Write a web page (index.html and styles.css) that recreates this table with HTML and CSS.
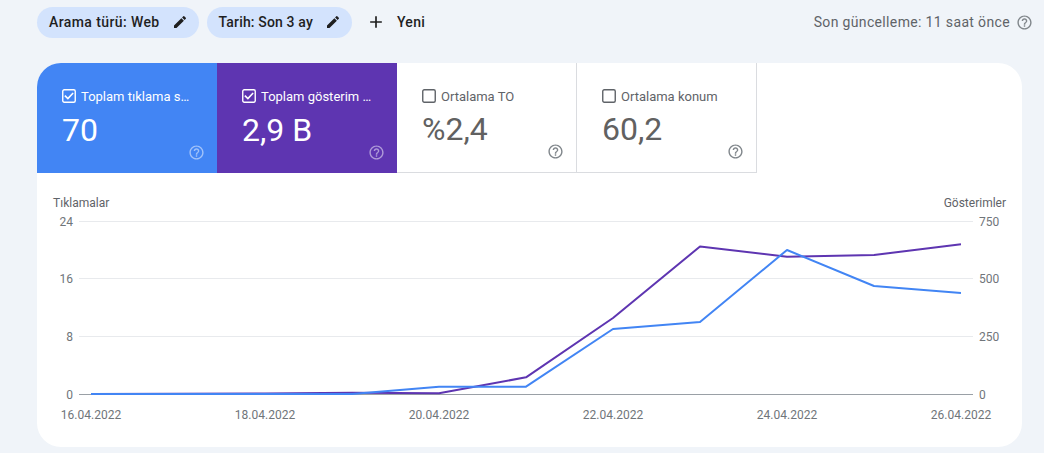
FILE: index.html
```html
<!DOCTYPE html>
<html lang="tr">
<head>
<meta charset="utf-8">
<title>Performans</title>
<link rel="stylesheet" href="styles.css">
</head>
<body>
<header class="topbar">
  <div class="filters">
    <button class="chip chip-type">Arama türü: Web
      <svg class="chip-icon" viewBox="0 0 24 24"><path d="M3 17.25V21h3.75L17.81 9.94l-3.75-3.75L3 17.25zM20.71 7.04c.39-.39.39-1.02 0-1.41l-2.34-2.34a.996.996 0 0 0-1.41 0l-1.83 1.83 3.75 3.75 1.83-1.83z"/></svg>
    </button>
    <button class="chip chip-date">Tarih: Son 3 ay
      <svg class="chip-icon" viewBox="0 0 24 24"><path d="M3 17.25V21h3.75L17.81 9.94l-3.75-3.75L3 17.25zM20.71 7.04c.39-.39.39-1.02 0-1.41l-2.34-2.34a.996.996 0 0 0-1.41 0l-1.83 1.83 3.75 3.75 1.83-1.83z"/></svg>
    </button>
    <button class="new">
      <svg class="plus" viewBox="0 0 24 24"><path d="M19 13h-6v6h-2v-6H5v-2h6V5h2v6h6v2z"/></svg>
      Yeni
    </button>
  </div>
  <div class="updated">Son güncelleme: 11 saat önce
    <svg class="help grey" viewBox="0 0 24 24"><path d="M11 18h2v-2h-2v2zm1-16C6.48 2 2 6.48 2 12s4.48 10 10 10 10-4.48 10-10S17.52 2 12 2zm0 18c-4.41 0-8-3.59-8-8s3.59-8 8-8 8 3.59 8 8-3.59 8-8 8zm0-14c-2.21 0-4 1.79-4 4h2c0-1.1.9-2 2-2s2 .9 2 2c0 2-3 1.75-3 5h2c0-2.25 3-2.5 3-5 0-2.21-1.79-4-4-4z"/></svg>
  </div>
</header>

<main class="card">
  <div class="tiles">
    <div class="tile tile-blue">
      <div class="tile-head">
        <svg class="cb" viewBox="0 0 14 14"><rect x="0.75" y="0.75" width="12.5" height="12.5" rx="1.5"/><polyline points="3.4,7.2 5.9,9.6 10.6,4.6"/></svg>
        <span class="tile-label">Toplam tıklama sayısı</span>
      </div>
      <div class="tile-body">
        <span class="tile-value">70</span>
        <svg class="help light" viewBox="0 0 24 24"><path d="M11 18h2v-2h-2v2zm1-16C6.48 2 2 6.48 2 12s4.48 10 10 10 10-4.48 10-10S17.52 2 12 2zm0 18c-4.41 0-8-3.59-8-8s3.59-8 8-8 8 3.59 8 8-3.59 8-8 8zm0-14c-2.21 0-4 1.79-4 4h2c0-1.1.9-2 2-2s2 .9 2 2c0 2-3 1.75-3 5h2c0-2.25 3-2.5 3-5 0-2.21-1.79-4-4-4z"/></svg>
      </div>
    </div>
    <div class="tile tile-purple">
      <div class="tile-head">
        <svg class="cb" viewBox="0 0 14 14"><rect x="0.75" y="0.75" width="12.5" height="12.5" rx="1.5"/><polyline points="3.4,7.2 5.9,9.6 10.6,4.6"/></svg>
        <span class="tile-label">Toplam gösterim sayısı</span>
      </div>
      <div class="tile-body">
        <span class="tile-value">2,9 B</span>
        <svg class="help light" viewBox="0 0 24 24"><path d="M11 18h2v-2h-2v2zm1-16C6.48 2 2 6.48 2 12s4.48 10 10 10 10-4.48 10-10S17.52 2 12 2zm0 18c-4.41 0-8-3.59-8-8s3.59-8 8-8 8 3.59 8 8-3.59 8-8 8zm0-14c-2.21 0-4 1.79-4 4h2c0-1.1.9-2 2-2s2 .9 2 2c0 2-3 1.75-3 5h2c0-2.25 3-2.5 3-5 0-2.21-1.79-4-4-4z"/></svg>
      </div>
    </div>
    <div class="tile tile-white">
      <div class="tile-head">
        <svg class="cb off" viewBox="0 0 14 14"><rect x="0.75" y="0.75" width="12.5" height="12.5" rx="1.5"/></svg>
        <span class="tile-label">Ortalama TO</span>
      </div>
      <div class="tile-body">
        <span class="tile-value">%2,4</span>
        <svg class="help grey" viewBox="0 0 24 24"><path d="M11 18h2v-2h-2v2zm1-16C6.48 2 2 6.48 2 12s4.48 10 10 10 10-4.48 10-10S17.52 2 12 2zm0 18c-4.41 0-8-3.59-8-8s3.59-8 8-8 8 3.59 8 8-3.59 8-8 8zm0-14c-2.21 0-4 1.79-4 4h2c0-1.1.9-2 2-2s2 .9 2 2c0 2-3 1.75-3 5h2c0-2.25 3-2.5 3-5 0-2.21-1.79-4-4-4z"/></svg>
      </div>
    </div>
    <div class="tile tile-white">
      <div class="tile-head">
        <svg class="cb off" viewBox="0 0 14 14"><rect x="0.75" y="0.75" width="12.5" height="12.5" rx="1.5"/></svg>
        <span class="tile-label">Ortalama konum</span>
      </div>
      <div class="tile-body">
        <span class="tile-value">60,2</span>
        <svg class="help grey" viewBox="0 0 24 24"><path d="M11 18h2v-2h-2v2zm1-16C6.48 2 2 6.48 2 12s4.48 10 10 10 10-4.48 10-10S17.52 2 12 2zm0 18c-4.41 0-8-3.59-8-8s3.59-8 8-8 8 3.59 8 8-3.59 8-8 8zm0-14c-2.21 0-4 1.79-4 4h2c0-1.1.9-2 2-2s2 .9 2 2c0 2-3 1.75-3 5h2c0-2.25 3-2.5 3-5 0-2.21-1.79-4-4-4z"/></svg>
      </div>
    </div>
  </div>

  <svg class="chart" viewBox="0 0 985 274" width="985" height="274">
    <g class="grid">
      <line x1="42" y1="48.5" x2="936" y2="48.5"/>
      <line x1="42" y1="105.5" x2="936" y2="105.5"/>
      <line x1="42" y1="163.5" x2="936" y2="163.5"/>
    </g>
    <line class="zero" x1="42" y1="221.5" x2="936" y2="221.5"/>
    <g class="axis-title">
      <text x="16" y="34">Tıklamalar</text>
      <text x="969" y="34" text-anchor="end">Gösterimler</text>
    </g>
    <g class="axis" text-anchor="end">
      <text x="36" y="53">24</text>
      <text x="36" y="110">16</text>
      <text x="36" y="168">8</text>
      <text x="36" y="226">0</text>
    </g>
    <g class="axis" text-anchor="start">
      <text x="942" y="53">750</text>
      <text x="942" y="110">500</text>
      <text x="942" y="168">250</text>
      <text x="942" y="226">0</text>
    </g>
    <g class="axis" text-anchor="middle">
      <text x="54" y="246">16.04.2022</text>
      <text x="228" y="246">18.04.2022</text>
      <text x="402" y="246">20.04.2022</text>
      <text x="576" y="246">22.04.2022</text>
      <text x="750" y="246">24.04.2022</text>
      <text x="924" y="246">26.04.2022</text>
    </g>
    <polyline class="line-purple" points="54,221 141,220.7 228,220.5 315,219.7 402,220.3 489,204.3 576,145 663,73.5 750,83.7 837,82 924,71.3"/>
    <polyline class="line-blue" points="54,221 141,221 228,221 315,221 402,213.7 489,213.7 576,156 663,149 750,77 837,113 924,120"/>
  </svg>
</main>
</body>
</html>
```

FILE: styles.css
```css
* { box-sizing: border-box; }

html, body {
  margin: 0;
  padding: 0;
}

body {
  background: #f0f4f9;
  font-family: Roboto, "Liberation Sans", Arial, sans-serif;
  color: #1f1f1f;
  width: 1044px;
  height: 453px;
  overflow: hidden;
}

.topbar {
  height: 44px;
  display: flex;
  align-items: center;
  justify-content: space-between;
  padding: 0 11px 0 37px;
}

.filters {
  display: flex;
  align-items: center;
  gap: 8px;
}

.chip {
  display: flex;
  align-items: center;
  gap: 12px;
  height: 31px;
  padding: 0 11px 0 12px;
  border: none;
  border-radius: 16px;
  background: #d3e3fd;
  font-family: Roboto, "Liberation Sans", Arial, sans-serif;
  font-size: 14px;
  font-weight: 500;
  color: #1f1f1f;
  letter-spacing: 0.4px;
}

.chip-date { letter-spacing: 0.15px; }

.chip-icon {
  width: 16px;
  height: 16px;
  fill: #1f1f1f;
}

.new {
  display: flex;
  align-items: center;
  gap: 11px;
  height: 31px;
  margin-left: 2px;
  padding: 0 4px;
  border: none;
  background: transparent;
  font-family: Roboto, "Liberation Sans", Arial, sans-serif;
  font-size: 14px;
  font-weight: 500;
  color: #1f1f1f;
  letter-spacing: 0.3px;
}

.plus {
  width: 20px;
  height: 20px;
  fill: #1f1f1f;
}

.updated {
  display: flex;
  align-items: center;
  gap: 6px;
  font-size: 14px;
  color: #5f6368;
  letter-spacing: 0.35px;
}

.help {
  width: 17px;
  height: 17px;
  flex: none;
}

.help.grey { fill: #80868b; }
.help.light { fill: rgba(255, 255, 255, 0.5); }

.card {
  margin: 19px 0 0 37px;
  width: 985px;
  height: 384px;
  background: #ffffff;
  border-radius: 24px;
  overflow: hidden;
}

.tiles {
  display: flex;
  height: 110px;
}

.tile {
  width: 180px;
  display: flex;
  flex-direction: column;
  justify-content: space-between;
  padding: 25px 24px 12px 25px;
}

.tile-blue { background: #4285f4; color: #ffffff; }
.tile-purple { background: #5e35b1; color: #ffffff; }
.tile-white {
  background: #ffffff;
  color: #5f6368;
  border-right: 1px solid #dadce0;
  border-bottom: 1px solid #dadce0;
}

.tile-head {
  display: flex;
  align-items: center;
  gap: 5px;
  height: 16px;
}

.cb {
  width: 14px;
  height: 14px;
  flex: none;
  fill: none;
  stroke: #ffffff;
  stroke-width: 1.4;
}

.cb polyline {
  stroke-width: 1.6;
  stroke-linecap: square;
}

.cb.off { stroke: #5f6368; }

.tile-label {
  font-size: 13px;
  white-space: nowrap;
  overflow: hidden;
  text-overflow: ellipsis;
  min-width: 0;
}

.tile-body {
  display: flex;
  justify-content: space-between;
  align-items: flex-end;
}

.tile-value {
  font-size: 32px;
  line-height: 32px;
  margin-bottom: 15px;
}

.tile-white .tile-value { color: #616161; }

.tile-body .help { margin-right: -12px; }

.chart {
  display: block;
}

.grid line {
  stroke: #e8eaed;
  stroke-width: 1;
}

.zero {
  stroke: #9aa0a6;
  stroke-width: 1;
}

.chart text {
  font-family: Roboto, "Liberation Sans", Arial, sans-serif;
  font-size: 12px;
  fill: #70757a;
}

.axis-title text { fill: #5f6368; }

.line-blue, .line-purple {
  fill: none;
  stroke-width: 2;
  stroke-linejoin: round;
}

.line-blue { stroke: #4285f4; }
.line-purple { stroke: #5e35b1; }
```
